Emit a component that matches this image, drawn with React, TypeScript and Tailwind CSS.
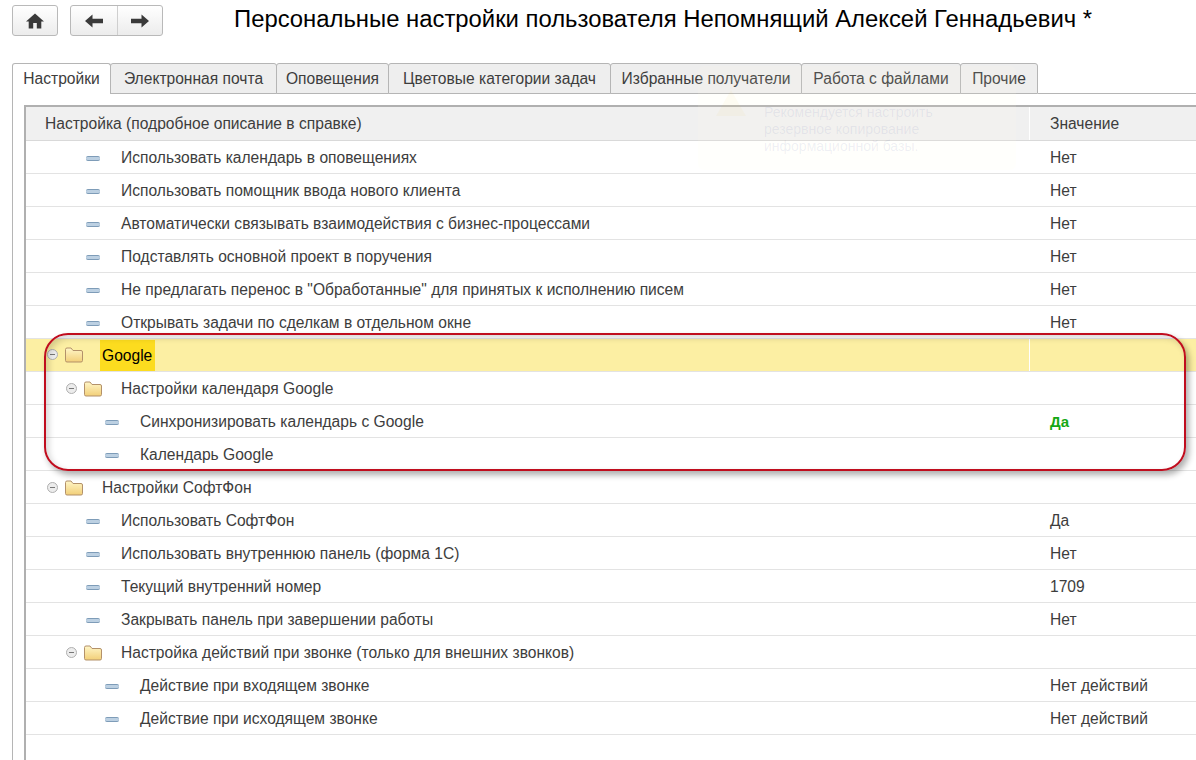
const tabs = [
  { label: 'Настройки', width: 'w-[99px]' },
  { label: 'Электронная почта', width: 'w-[167px]' },
  { label: 'Оповещения', width: 'w-[113px]' },
  { label: 'Цветовые категории задач', width: 'w-[223px]' },
  { label: 'Избранные получатели', width: 'w-[192px]' },
  { label: 'Работа с файлами', width: 'w-[160px]' },
  { label: 'Прочие', width: 'w-[78px]' },
]

type RowData = {
  label: string
  value?: string
  depth: number
  group?: boolean
  active?: boolean
  green?: boolean
}

const rows: RowData[] = [
  { label: 'Использовать календарь в оповещениях', value: 'Нет', depth: 1 },
  { label: 'Использовать помощник ввода нового клиента', value: 'Нет', depth: 1 },
  { label: 'Автоматически связывать взаимодействия с бизнес-процессами', value: 'Нет', depth: 1 },
  { label: 'Подставлять основной проект в поручения', value: 'Нет', depth: 1 },
  { label: 'Не предлагать перенос в "Обработанные" для принятых к исполнению писем', value: 'Нет', depth: 1 },
  { label: 'Открывать задачи по сделкам в отдельном окне', value: 'Нет', depth: 1 },
  { label: 'Google', depth: 0, group: true, active: true },
  { label: 'Настройки календаря Google', depth: 1, group: true },
  { label: 'Синхронизировать календарь с Google', value: 'Да', depth: 2, green: true },
  { label: 'Календарь Google', depth: 2 },
  { label: 'Настройки СофтФон', depth: 0, group: true },
  { label: 'Использовать СофтФон', value: 'Да', depth: 1 },
  { label: 'Использовать внутреннюю панель (форма 1С)', value: 'Нет', depth: 1 },
  { label: 'Текущий внутренний номер', value: '1709', depth: 1 },
  { label: 'Закрывать панель при завершении работы', value: 'Нет', depth: 1 },
  { label: 'Настройка действий при звонке (только для внешних звонков)', depth: 1, group: true },
  { label: 'Действие при входящем звонке', value: 'Нет действий', depth: 2 },
  { label: 'Действие при исходящем звонке', value: 'Нет действий', depth: 2 },
]

function FolderIcon() {
  return (
    <svg width="18" height="16" viewBox="0 0 18 16" className="block shrink-0">
      <defs>
        <linearGradient id="folderFill" x1="0" y1="0" x2="0" y2="1">
          <stop offset="0" stopColor="#fff6c8" />
          <stop offset="1" stopColor="#f2cf78" />
        </linearGradient>
      </defs>
      <path
        d="M0.5 2.5 Q0.5 1 2 1 H6 L8 3.5 H16 Q17.5 3.5 17.5 5 V13.5 Q17.5 15 16 15 H2 Q0.5 15 0.5 13.5 Z"
        fill="url(#folderFill)"
        stroke="#b3916a"
      />
    </svg>
  )
}

function CollapseIcon() {
  return (
    <span className="flex h-[11px] w-[11px] shrink-0 items-center justify-center rounded-full border border-[#b0b0b0] bg-[#ececec]">
      <span className="h-px w-[5px] bg-[#777]" />
    </span>
  )
}

function LeafIcon() {
  return (
    <span className="block h-[5px] w-[14px] shrink-0 rounded-[2px] border-y border-y-[#7e9cb8] bg-[#bcd0e2]" />
  )
}

function Row({ row }: { row: RowData }) {
  const pad = row.group ? (row.depth === 0 ? 'pl-[21px]' : 'pl-[40px]') : row.depth === 1 ? 'pl-[60px]' : 'pl-[79px]'
  return (
    <div className={`flex h-[33px] border-b border-[#e3e3e3] ${row.active ? 'bg-[#fcefa3]' : ''}`}>
      <div className={`flex shrink-0 items-center ${row.active ? 'w-[1003px]' : 'w-[1004px] pt-[2px]'} ${pad}`}>
        {row.group ? (
          <>
            <span className="-mt-[2px]">
              <CollapseIcon />
            </span>
            <span className="ml-[7px]">
              <FolderIcon />
            </span>
            <span
              className={`flex items-center ${
                row.active ? 'ml-[17px] h-[31px] bg-[#fcdc1f] pl-[2px] pr-[3px] pt-[1px] text-black' : 'ml-[19px]'
              }`}
            >
              {row.label}
            </span>
          </>
        ) : (
          <>
            <LeafIcon />
            <span className="ml-[21px]">{row.label}</span>
          </>
        )}
      </div>
      <div
        className={`flex flex-1 items-center pl-[20px] pt-[2px] ${row.active ? 'border-l border-white' : ''} ${
          row.green ? 'text-[15px] font-bold text-[#14a814]' : ''
        }`}
      >
        {row.value}
      </div>
    </div>
  )
}

export default function App() {
  return (
    <div className="relative h-[760px] w-[1196px] overflow-hidden bg-white font-['Liberation_Sans',Arial,sans-serif] text-[15.6px] text-[#3d3d3d]">
      <header className="flex h-[63px] pl-[12px] pt-[5px]">
        <button className="flex h-[31px] w-[46px] items-center justify-center rounded-[3px] border border-[#b9b9b9] bg-gradient-to-b from-white to-[#ececec]">
          <svg width="18" height="16" viewBox="0 0 18 16" fill="#3a3a3a">
            <path d="M9 0.5 L18 8.5 H15.3 V15.5 H10.8 V10 H7.2 V15.5 H2.7 V8.5 H0 Z" />
          </svg>
        </button>
        <div className="ml-[12px] flex h-[31px] w-[93px] rounded-[3px] border border-[#b9b9b9] bg-gradient-to-b from-white to-[#ececec]">
          <button className="flex w-[47px] items-center justify-center border-r border-[#cfcfcf]">
            <svg width="18" height="14" viewBox="0 0 18 14" fill="#3a3a3a">
              <path d="M0 7 L7.5 0.5 V4.8 H18 V9.2 H7.5 V13.5 Z" />
            </svg>
          </button>
          <button className="flex flex-1 items-center justify-center">
            <svg width="18" height="14" viewBox="0 0 18 14" fill="#3a3a3a">
              <path d="M18 7 L10.5 0.5 V4.8 H0 V9.2 H10.5 V13.5 Z" />
            </svg>
          </button>
        </div>
        <h1 className="ml-[71px] mt-[1px] whitespace-nowrap text-[23.85px] font-normal leading-[26px] text-black">
          Персональные настройки пользователя Непомнящий Алексей Геннадьевич *
        </h1>
      </header>

      <nav className="flex h-[31px] pl-[12px]">
        {tabs.map((tab, i) => (
          <div
            key={tab.label}
            className={`flex items-center justify-center whitespace-nowrap rounded-t-[3px] border border-[#b5b5b5] ${tab.width} ${
              i === 0 ? 'border-b-0 bg-white' : 'bg-[#eeeeee] -ml-px'
            }`}
          >
            {tab.label}
          </div>
        ))}
        <div className="flex-1 border-b border-[#b5b5b5]" />
      </nav>

      <div className="ml-[12px] h-[666px] border-l border-[#b5b5b5] pl-[11px] pt-[11px]">
        <div className="h-full border-l-2 border-t-2 border-[#b0b0b0]">
          <div className="flex h-[34px] border-b border-[#d9d9d9] bg-[#f0f0f0]">
            <div className="flex w-[1003px] shrink-0 items-center pl-[19px]">Настройка (подробное описание в справке)</div>
            <div className="flex flex-1 items-center border-l border-white pl-[20px]">Значение</div>
          </div>
          {rows.map((row) => (
            <Row key={row.label} row={row} />
          ))}
        </div>
      </div>

      {/* almost faded out notification lying over the form */}
      <div className="pointer-events-none absolute left-[698px] top-[66px] flex h-[104px] w-[318px] gap-[17px] rounded-md bg-[#fffbe6]/10 pl-[17px] pt-[38px] text-[14px] leading-[17px] text-[#5a66a8]/10">
        <svg width="32" height="30" viewBox="0 0 32 30" className="-mt-[16px] shrink-0">
          <path d="M16 2 L31 28 H1 Z" fill="#f5c842" fillOpacity="0.05" />
        </svg>
        <div>
          Рекомендуется настроить
          <br />
          резервное копирование
          <br />
          информационной базы.
        </div>
      </div>

      {/* red highlight drawn over the screenshot */}
      <div className="pointer-events-none absolute left-[44px] top-[333px] h-[138px] w-[1142px] rounded-[24px] border-2 border-[#c00d1e] shadow-[3px_4px_6px_rgba(0,0,0,0.32),inset_3px_3px_6px_rgba(0,0,0,0.16)]" />
    </div>
  )
}
